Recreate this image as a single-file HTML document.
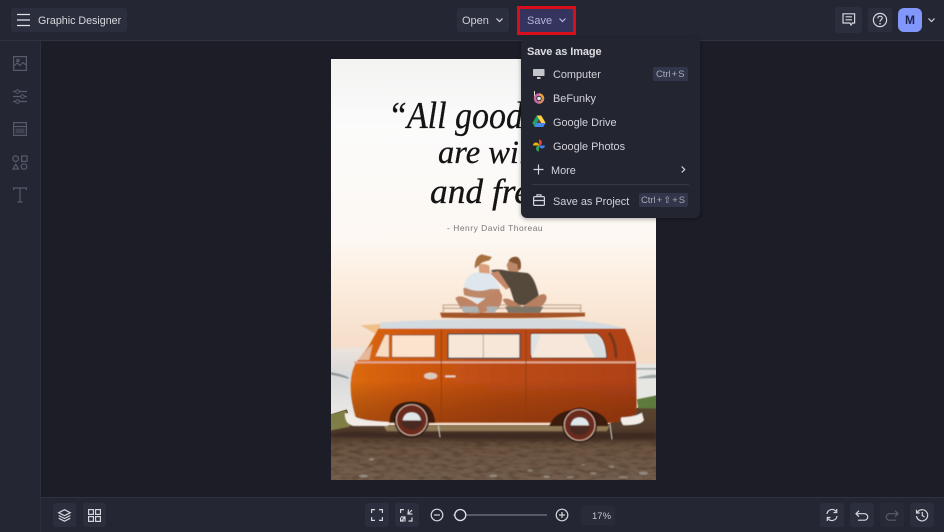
<!DOCTYPE html>
<html lang="en"><head><meta charset="utf-8"><title>Graphic Designer</title>
<style>
html,body{margin:0;padding:0;width:944px;height:532px;overflow:hidden;background:#1c1d27}
body{position:relative;font-family:"Liberation Sans",sans-serif;color:#d5d6dc}
#w{position:absolute;left:0;top:0;width:944px;height:532px;filter:blur(.3px)}
.a{position:absolute}
.t{position:absolute;white-space:nowrap;line-height:14px}
.m{font-size:10.9px;color:#d2d3d9}
.btn{position:absolute;background:#2b2e3c;border-radius:3px}
svg{position:absolute;overflow:visible}
.i{fill:none;stroke:#d5d6dc;stroke-width:1.2}
.s{fill:none;stroke:#565a6b;stroke-width:1.2}
</style></head><body><div id="w">
<div class="a" style="left:0;top:0;width:944px;height:41px;background:#242733;border-bottom:1px solid #2f3240;box-sizing:border-box"></div>
<div class="a" style="left:0;top:41px;width:41px;height:491px;background:#242733;border-right:1px solid #2c2f3c;box-sizing:border-box"></div>
<div class="a" style="left:41px;top:497px;width:903px;height:35px;background:#242733;border-top:1px solid #2f3240;box-sizing:border-box"></div>

<!-- poster -->
<svg class="a" style="left:0;top:0" width="944" height="532" viewBox="0 0 944 532">
<defs>
<linearGradient id="sky" x1="0" y1="0" x2="0" y2="1"><stop offset="0" stop-color="#f3f3f2"/><stop offset=".16" stop-color="#fbfbfb"/><stop offset=".43" stop-color="#fdf8f2"/><stop offset=".57" stop-color="#fbe9d8"/><stop offset=".7" stop-color="#f4dcc7"/><stop offset="1" stop-color="#eeddcf"/></linearGradient>
<linearGradient id="sea" x1="0" y1="0" x2="0" y2="1"><stop offset="0" stop-color="#ece3db"/><stop offset=".4" stop-color="#d9d9da"/><stop offset="1" stop-color="#e9e8e6"/></linearGradient>
<linearGradient id="body" x1="0" y1="0" x2="1" y2="0"><stop offset="0" stop-color="#dc6a12"/><stop offset=".16" stop-color="#d35c10"/><stop offset=".5" stop-color="#bd4c13"/><stop offset="1" stop-color="#ae4114"/></linearGradient>
<linearGradient id="shade" x1="0" y1="0" x2="0" y2="1"><stop offset=".55" stop-color="#000" stop-opacity="0"/><stop offset="1" stop-color="#4a1a05" stop-opacity=".35"/></linearGradient>
<linearGradient id="gnd" x1="0" y1="0" x2="0" y2="1"><stop offset="0" stop-color="#5f4a34"/><stop offset=".45" stop-color="#4f392a"/><stop offset=".62" stop-color="#6d5542"/><stop offset="1" stop-color="#75604f"/></linearGradient>
<filter id="b" x="-5%" y="-5%" width="110%" height="110%"><feGaussianBlur stdDeviation="1.6"/></filter>
<filter id="b2" x="-5%" y="-40%" width="110%" height="180%"><feGaussianBlur stdDeviation="5"/></filter>
<filter id="n" x="0" y="0" width="100%" height="100%" color-interpolation-filters="sRGB"><feTurbulence type="fractalNoise" baseFrequency=".03 .1" numOctaves="2" seed="7"/><feColorMatrix values="0 0 0 0 .22  0 0 0 0 .15  0 0 0 0 .1  2 0 0 0 -.8"/><feGaussianBlur stdDeviation="1.5"/></filter>
</defs>
<rect x="331" y="59" width="325" height="421" fill="url(#sky)"/>
<g font-family="Liberation Serif,serif" font-style="italic" fill="#141414" stroke="#141414" stroke-width=".3">
<text x="388" y="128" font-size="38" textLength="135" lengthAdjust="spacingAndGlyphs">“All good</text>
<text x="438" y="163" font-size="33" textLength="90" lengthAdjust="spacingAndGlyphs">are wil</text>
<text x="430" y="203" font-size="35" textLength="100" lengthAdjust="spacingAndGlyphs">and fre</text>
</g>
<text x="447" y="231" font-family="Liberation Sans,sans-serif" font-size="8.4" fill="#777" letter-spacing=".55">- Henry David Thoreau</text>

<g transform="translate(330 240) scale(.33333)">
<clipPath id="pc"><rect x="3" y="0" width="975" height="720"/></clipPath>
<g clip-path="url(#pc)">
<g filter="url(#b)">
<!-- sea -->
<path d="M0 322H120V525H0Z" fill="url(#sea)"/><path d="M0 396q30 4 56 16v5q-30-9-56-13Z" fill="#8f9599"/>
<path d="M918 372H980V475H918Z" fill="#e6e6e3"/><path d="M918 384h62v5h-62ZM925 412q30-8 55-8v10q-25 1-55 2Z" fill="#9fa8a6"/>
</g>
<!-- ground -->
<path d="M0 524L50 508L65 540L180 556H830L920 505L980 465V724H0Z" fill="url(#gnd)"/>
<rect x="0" y="600" width="980" height="124" filter="url(#n)" opacity=".5"/>
<g filter="url(#b)">
<path d="M920 478L980 466V505H925Z" fill="#5f7a3c"/>
<path d="M0 524L48 510L60 560L0 572Z" fill="#7f7e45"/>
<path d="M160 556H840L830 574H170Z" fill="#8f7a55"/>
</g>
<path d="M0 582Q80 568 160 578H980V600Q500 604 300 596Q150 596 0 592Z" fill="#35241a" opacity=".7" filter="url(#b2)"/>
<g filter="url(#b)" opacity=".6">
<g fill="#a9a6a0">
<ellipse cx="100" cy="708" rx="14" ry="5"/><ellipse cx="125" cy="658" rx="8" ry="4"/><ellipse cx="490" cy="708" rx="12" ry="4"/><ellipse cx="650" cy="710" rx="10" ry="4"/><ellipse cx="720" cy="712" rx="12" ry="3"/><ellipse cx="845" cy="680" rx="8" ry="3"/><ellipse cx="940" cy="700" rx="14" ry="5"/><ellipse cx="880" cy="712" rx="16" ry="3"/><ellipse cx="790" cy="700" rx="10" ry="3"/><ellipse cx="600" cy="692" rx="8" ry="3"/><ellipse cx="760" cy="675" rx="6" ry="2"/>
</g>
</g>
<g filter="url(#b)">
<!-- roof -->
<path d="M150 248Q300 236 620 236Q800 238 885 266H145Z" fill="#d4dbe0"/>
<path d="M92 256L150 252L152 290Z" fill="#efc08a"/>
<!-- body -->
<path d="M145 266H885Q912 320 918 370L920 520Q880 552 820 548H330Q200 552 80 540Q60 480 62 430Q64 390 80 365L115 320Z" fill="url(#body)"/>
<path d="M145 266H885Q912 320 918 370L920 520Q880 552 820 548H330Q200 552 80 540Q60 480 62 430Q64 390 80 365L115 320Z" fill="url(#shade)"/>
<path d="M72 367H915" stroke="#e2a98e" stroke-width="6" fill="none"/>
<path d="M334 270V545M588 270V545" stroke="#8f3a10" stroke-width="2.500"/>
<!-- windows -->
<path d="M134 350L165 283H178V352Z" fill="#f8dcc1" stroke="#b9683b" stroke-width="3"/>
<path d="M185 285H315V352H185Z" fill="#fbe3cd" stroke="#9a5530" stroke-width="3"/>
<path d="M354 282H570V355H354Z" fill="#f6e7d9" stroke="#4d4a48" stroke-width="4"/>
<path d="M460 284V353" stroke="#b8a99c" stroke-width="3"/>
<path d="M603 280H800Q828 295 830 354H603Z" fill="#f7e7da" stroke="#5b3a2d" stroke-width="3"/>
<path d="M760 285H800Q822 300 828 352H795Z" fill="#d8dedf"/>
<path d="M603 284H632L610 345H603Z" fill="#dfe2e2"/>
<path d="M838 280Q858 310 858 355" stroke="#54301f" stroke-width="9" fill="none" stroke-dasharray="4 2"/>
<path d="M78 360L128 312L118 360Z" fill="#e9dcd0" opacity=".7"/>
<!-- handle -->
<ellipse cx="302" cy="408" rx="20" ry="10" fill="#ddc9bc"/><rect x="345" y="406" width="32" height="6" rx="3" fill="#e5d2c6"/>
<!-- bumpers -->
<path d="M44 520L60 518Q70 542 175 546V558H70Q44 552 44 520Z" fill="#f1ece6"/>
<path d="M874 532Q910 532 936 518L942 540Q935 556 880 556Q870 545 874 532Z" fill="#f1ece6"/>
<!-- wheels -->
<path d="M178 548Q180 484 245 484Q310 484 316 548Z" fill="#3a1a0e"/>
<path d="M658 558Q675 508 750 508Q825 508 836 558Z" fill="#3a1a0e"/>
<circle cx="245" cy="540" r="52" fill="#1f1410"/><circle cx="245" cy="540" r="46" fill="#6b2c1e" stroke="#dcb4a4" stroke-width="3"/>
<path d="M218 541Q222 517 245 517Q268 517 273 541Z" fill="#dfe7ea"/><path d="M212 543H278Q272 568 245 570Q218 568 212 543Z" fill="#4a2a20"/>
<circle cx="749" cy="555" r="52" fill="#1f1410"/><circle cx="749" cy="555" r="46" fill="#6b2c1e" stroke="#dcb4a4" stroke-width="3"/>
<path d="M722 556Q726 532 749 532Q772 532 777 556Z" fill="#dfe7ea"/><path d="M716 558H782Q776 584 749 586Q722 584 716 558Z" fill="#4a2a20"/>
<path d="M325 556L330 592M840 552L846 598" stroke="#d8d8d0" stroke-width="3"/>
</g>
<!-- men + rack -->
<g transform="translate(330 15)" filter="url(#b)">
<!-- deck -->
<path d="M0 203H435V214Q300 222 5 218Z" fill="#a4572c"/>
<path d="M10 203V180H422V203M10 190H422" fill="none" stroke="#c7ae96" stroke-width="4"/>
<!-- left man -->
<path d="M116 60Q128 52 148 62L150 92L130 98L118 88Z" fill="#d8a07c"/>
<path d="M104 70Q104 34 125 28L156 36L148 46Q124 50 116 62Z" fill="#a8713f"/>
<path d="M70 140Q72 92 108 82L150 86Q172 105 180 132L150 135L140 165L108 175L84 150Z" fill="#dfe7ee"/>
<path d="M70 130L76 128Q110 145 150 132L178 132L184 150L150 160Q100 160 72 150Z" fill="#bf8867"/>
<path d="M46 160Q60 142 112 178L150 150Q178 130 186 150Q188 178 170 195L110 206H90L62 190Z" fill="#bd8566"/>
<path d="M62 184H112L118 202H70ZM140 184H175L165 202H142Z" fill="#aeb3b4"/>
<!-- right man -->
<path d="M200 60Q204 44 225 46L238 60L234 85L216 90L205 78Z" fill="#bd8868"/>
<path d="M205 48Q215 32 232 36Q246 44 242 72L234 76L232 58Z" fill="#835432"/>
<path d="M152 76Q175 70 205 78L262 84Q282 92 296 150L275 180H226L210 130Z" fill="#54493b"/>
<path d="M150 84L175 78L208 128L198 134Z" fill="#c3896a"/>
<path d="M188 165Q200 150 246 186L296 152Q318 140 320 158Q318 178 290 192L240 200L205 188Z" fill="#b87f60"/>
<path d="M195 185H310L300 203H205Z" fill="#7c7468"/>
</g>
</g>
</g>
</svg>

<!-- Top left -->
<div class="btn" style="left:11px;top:8px;width:116px;height:24px"></div>
<svg style="left:17px;top:14px" width="14" height="12"><path d="M0 .5H13M0 6H13M0 11.500H13" stroke="#e2e3e8" stroke-width="1.2" fill="none"/></svg>
<div class="t" style="left:38px;top:14px;font-size:10.7px;color:#d9dae0">Graphic Designer</div>

<!-- Left icons -->
<svg style="left:13px;top:56px" width="14" height="15"><rect x=".6" y=".6" width="12.800" height="13.800" class="s"/><path d="M1 10L4 7L7 9.500L10 6.500L13 9M4 3.500h2v2h-2Z" class="s"/></svg>
<svg style="left:13px;top:89px" width="15" height="15"><path d="M0 2.500H14M0 7.500H14M0 12.500H14" class="s"/><circle cx="4.500" cy="2.500" r="1.800" fill="#242733" stroke="#565a6b"/><circle cx="9.500" cy="7.500" r="1.800" fill="#242733" stroke="#565a6b"/><circle cx="4.500" cy="12.500" r="1.800" fill="#242733" stroke="#565a6b"/></svg>
<svg style="left:13px;top:122px" width="14" height="14"><rect x=".6" y=".6" width="12.800" height="12.800" class="s"/><path d="M.6 4.500H13.400" class="s"/><rect x="2.500" y="6.500" width="9" height="5" fill="#3f4252"/></svg>
<svg style="left:12px;top:155px" width="16" height="15"><circle cx="3.700" cy="3.700" r="2.800" class="s"/><rect x="9.600" y="1" width="5.400" height="5.400" class="s"/><path d="M3.700 9.200L6.500 14H1Z" class="s"/><circle cx="12" cy="11.500" r="2.800" class="s"/></svg>
<svg style="left:13px;top:187px" width="14" height="16"><path d="M.6 3V1H13.400V3M7 1V15M4.500 15H9.500" class="s"/></svg>

<!-- Open / Save -->
<div class="btn" style="left:457px;top:8px;width:52px;height:24px"></div>
<div class="t" style="left:462px;top:14px;font-size:11px;color:#cfd0d7">Open</div>
<svg style="left:496px;top:18px" width="7" height="5"><path d="M.5 .5L3.500 3.500L6.500 .5" class="i"/></svg>
<div class="a" style="left:517px;top:6px;width:59px;height:29px;box-sizing:border-box;border:3px solid #d80f1a;background:#35345f"></div>
<div class="t" style="left:527px;top:14px;font-size:11px;color:#b4b6dd">Save</div>
<svg style="left:559px;top:18px" width="7" height="5"><path d="M.5 .5L3.500 3.500L6.500 .5" fill="none" stroke="#b4b6dd" stroke-width="1.2"/></svg>

<!-- Top right -->
<div class="btn" style="left:835px;top:7px;width:27px;height:26px"></div>
<svg style="left:842px;top:13px" width="14" height="15"><path d="M1 .8H12.600V10H10.500L9 12L8 10H1Z" class="i"/><path d="M3.500 3.800H10M3.500 6.800H10" class="i"/></svg>
<div class="btn" style="left:868px;top:8px;width:24px;height:24px"></div>
<svg style="left:872px;top:12px" width="16" height="16"><circle cx="8" cy="8" r="6.600" class="i"/><path d="M5.800 6.300Q6 4.200 8 4.200Q10.200 4.200 10.200 6Q10.200 7.200 8.900 7.900Q8 8.400 8 9.800" class="i"/><circle cx="8" cy="11.700" r=".8" fill="#d5d6dc"/></svg>
<div class="a" style="left:898px;top:8px;width:24px;height:24px;border-radius:6px;background:#8197fb"></div>
<div class="t" style="left:898px;top:13px;width:24px;text-align:center;font-size:12px;font-weight:bold;color:#1c2350">M</div>
<svg style="left:928px;top:18px" width="7" height="5"><path d="M.5 .5L3.500 3.500L6.500 .5" class="i" stroke-width="1.4"/></svg>

<!-- Dropdown -->
<div class="a" style="left:521px;top:38px;width:179px;height:180px;border-radius:6px;background:#232530;box-shadow:0 1px 5px rgba(0,0,0,.35)"></div>
<div class="t" style="left:527px;top:45px;font-size:11px;font-weight:bold;color:#dcdde2;letter-spacing:-.1px">Save as Image</div>
<svg style="left:533px;top:69px" width="12" height="12"><rect x="0" y="0" width="11.500" height="7" rx=".8" fill="#c5c6cc"/><path d="M4 8H7.500V10H4Z" fill="#c5c6cc"/></svg>
<div class="t m" style="left:553px;top:68px">Computer</div>
<div class="a" style="left:653px;top:67px;width:35px;height:14px;border-radius:2px;background:#32364a"></div>
<div class="t" style="left:656px;top:67px;font-size:9.4px;color:#a8aab6;word-spacing:-1.5px">Ctrl + S</div>
<svg style="left:533px;top:91px" width="12" height="14"><path d="M1.500 0V6" stroke="#ddd" stroke-width="1"/><circle cx="6" cy="7.500" r="4" fill="none" stroke="#c86ba0" stroke-width="2.500"/><path d="M6 3.500A4 4 0 0 1 10 7.500" fill="none" stroke="#e5a13a" stroke-width="2.500"/><path d="M10 7.500A4 4 0 0 1 6 11.500" fill="none" stroke="#d88a60" stroke-width="2.500"/><circle cx="6" cy="7.500" r="1.800" fill="#ececec"/></svg>
<div class="t m" style="left:553px;top:92px">BeFunky</div>
<svg style="left:532px;top:115px" width="14" height="13"><path d="M4.800 .5H9.200L7 4.300L4.800 8L2.800 11.800L.3 8Z" fill="#1fa463"/><path d="M4.800 .5H9.200L13.700 8H9.200Z" fill="#ffd04b"/><path d="M4.600 8H13.700L11.200 12H2.400Z" fill="#4688f4"/><path d="M5 8L7 4.500L9.100 8Z" fill="#ea4335" opacity=".45"/></svg>
<div class="t m" style="left:553px;top:116px">Google Drive</div>
<svg style="left:532px;top:139px" width="14" height="13"><path d="M7 6.500V.5A3 3 0 0 1 7 6.500Z" fill="#e54335"/><path d="M7 6.500H13A3 3 0 0 1 7 6.500Z" fill="#4081ec"/><path d="M7 6.500V12.500A3 3 0 0 1 7 6.500Z" fill="#34a353"/><path d="M7 6.500H1A3 3 0 0 1 7 6.500Z" fill="#f6b704"/></svg>
<div class="t m" style="left:553px;top:140px">Google Photos</div>
<svg style="left:533px;top:164px" width="11" height="11"><path d="M5.500 .5V10.500M.5 5.500H10.500" class="i"/></svg>
<div class="t m" style="left:551px;top:164px">More</div>
<svg style="left:681px;top:166px" width="5" height="7"><path d="M.7 .5L3.700 3.500L.7 6.500" class="i"/></svg>
<div class="a" style="left:532px;top:184px;width:157px;height:1px;background:#363946"></div>
<svg style="left:533px;top:194px" width="12" height="12"><rect x=".6" y="2.600" width="10.800" height="8.800" rx="1.200" class="i"/><path d="M4 2.500V.8H8V2.500M.6 6.500H11.400" class="i"/></svg>
<div class="t m" style="left:553px;top:195px">Save as Project</div>
<div class="a" style="left:639px;top:193px;width:49px;height:14px;border-radius:2px;background:#32364a"></div>
<div class="t" style="left:641px;top:193px;font-size:9.4px;color:#a8aab6;word-spacing:-1.5px;font-family:'Liberation Sans','DejaVu Sans',sans-serif">Ctrl + ⇧ + S</div>

<!-- Bottom left -->
<div class="btn" style="left:53px;top:503px;width:23px;height:24px"></div>
<svg style="left:58px;top:509px" width="13" height="13"><path d="M6.500 .7L12.300 3.700L6.500 6.700L.7 3.700Z" class="i"/><path d="M.7 6.500L6.500 9.500L12.300 6.500M.7 9.200L6.500 12.200L12.300 9.200" class="i"/></svg>
<div class="btn" style="left:83px;top:503px;width:23px;height:24px"></div>
<svg style="left:88px;top:509px" width="13" height="13"><rect x=".6" y=".6" width="4.800" height="4.800" class="i"/><rect x="7.600" y=".6" width="4.800" height="4.800" class="i"/><rect x=".6" y="7.600" width="4.800" height="4.800" class="i"/><rect x="7.600" y="7.600" width="4.800" height="4.800" class="i"/></svg>

<!-- Bottom centre -->
<div class="btn" style="left:365px;top:503px;width:24px;height:24px"></div>
<svg style="left:371px;top:509px" width="12" height="12"><path d="M.6 4V.6H4M8 .6H11.400V4M11.400 8V11.400H8M4 11.400H.6V8" class="i"/></svg>
<div class="btn" style="left:395px;top:503px;width:24px;height:24px"></div>
<svg style="left:400px;top:509px" width="13" height="13"><path d="M.6 4V.6H4M.6 8.500V12H4M12 8.500V12H8.500M8.500 .6L8 5H12.400M8 5L12 1M1 8L5 8V12.500M5 8L1.500 12" class="i"/></svg>
<svg style="left:430px;top:508px" width="14" height="14"><circle cx="7" cy="7" r="5.800" class="i"/><path d="M4 7H10" class="i"/></svg>
<svg style="left:452px;top:507px" width="96" height="16"><path d="M1 8H3M14 8H95" stroke="#8a8c98" stroke-width="1"/><circle cx="8.300" cy="8" r="5.500" fill="#242733" stroke="#e2e3e8" stroke-width="1.300"/></svg>
<svg style="left:555px;top:508px" width="14" height="14"><circle cx="7" cy="7" r="5.800" class="i"/><path d="M4 7H10M7 4V10" class="i"/></svg>
<div class="a" style="left:581px;top:506px;width:34px;height:19px;border-radius:3px;background:#282b38"></div>
<div class="t" style="left:592px;top:510px;font-size:9.500px;color:#c5c6cd">17%</div>

<!-- Bottom right -->
<div class="btn" style="left:820px;top:503px;width:24px;height:24px"></div>
<svg style="left:825px;top:508px" width="14" height="14"><path d="M2 6A5 5 0 0 1 11 3.500M12 8A5 5 0 0 1 3 10.500" class="i"/><path d="M11.700 1V4.500H8.500" class="i"/><path d="M2.300 13V9.500H5.500" class="i"/></svg>
<div class="btn" style="left:850px;top:503px;width:24px;height:24px"></div>
<svg style="left:855px;top:510px" width="14" height="12"><path d="M4 .7L1 3.700L4 6.700M1 3.700H9.500A3.200 3.200 0 0 1 9.500 10.200H3" class="i"/></svg>
<div class="btn" style="left:880px;top:503px;width:24px;height:24px;background:#282a37"></div>
<svg style="left:885px;top:510px" width="14" height="12"><path d="M10 .7L13 3.700L10 6.700M13 3.700H4.500A3.200 3.200 0 0 0 4.500 10.200H11" fill="none" stroke="#5a5d6c" stroke-width="1.200"/></svg>
<div class="btn" style="left:910px;top:503px;width:24px;height:24px"></div>
<svg style="left:915px;top:508px" width="14" height="14"><path d="M2.200 4.500A5.600 5.600 0 1 1 1.500 8M1.500 1.800V5H4.700M7.300 4V7.500L9.500 9" class="i"/></svg>
</div></body></html>
